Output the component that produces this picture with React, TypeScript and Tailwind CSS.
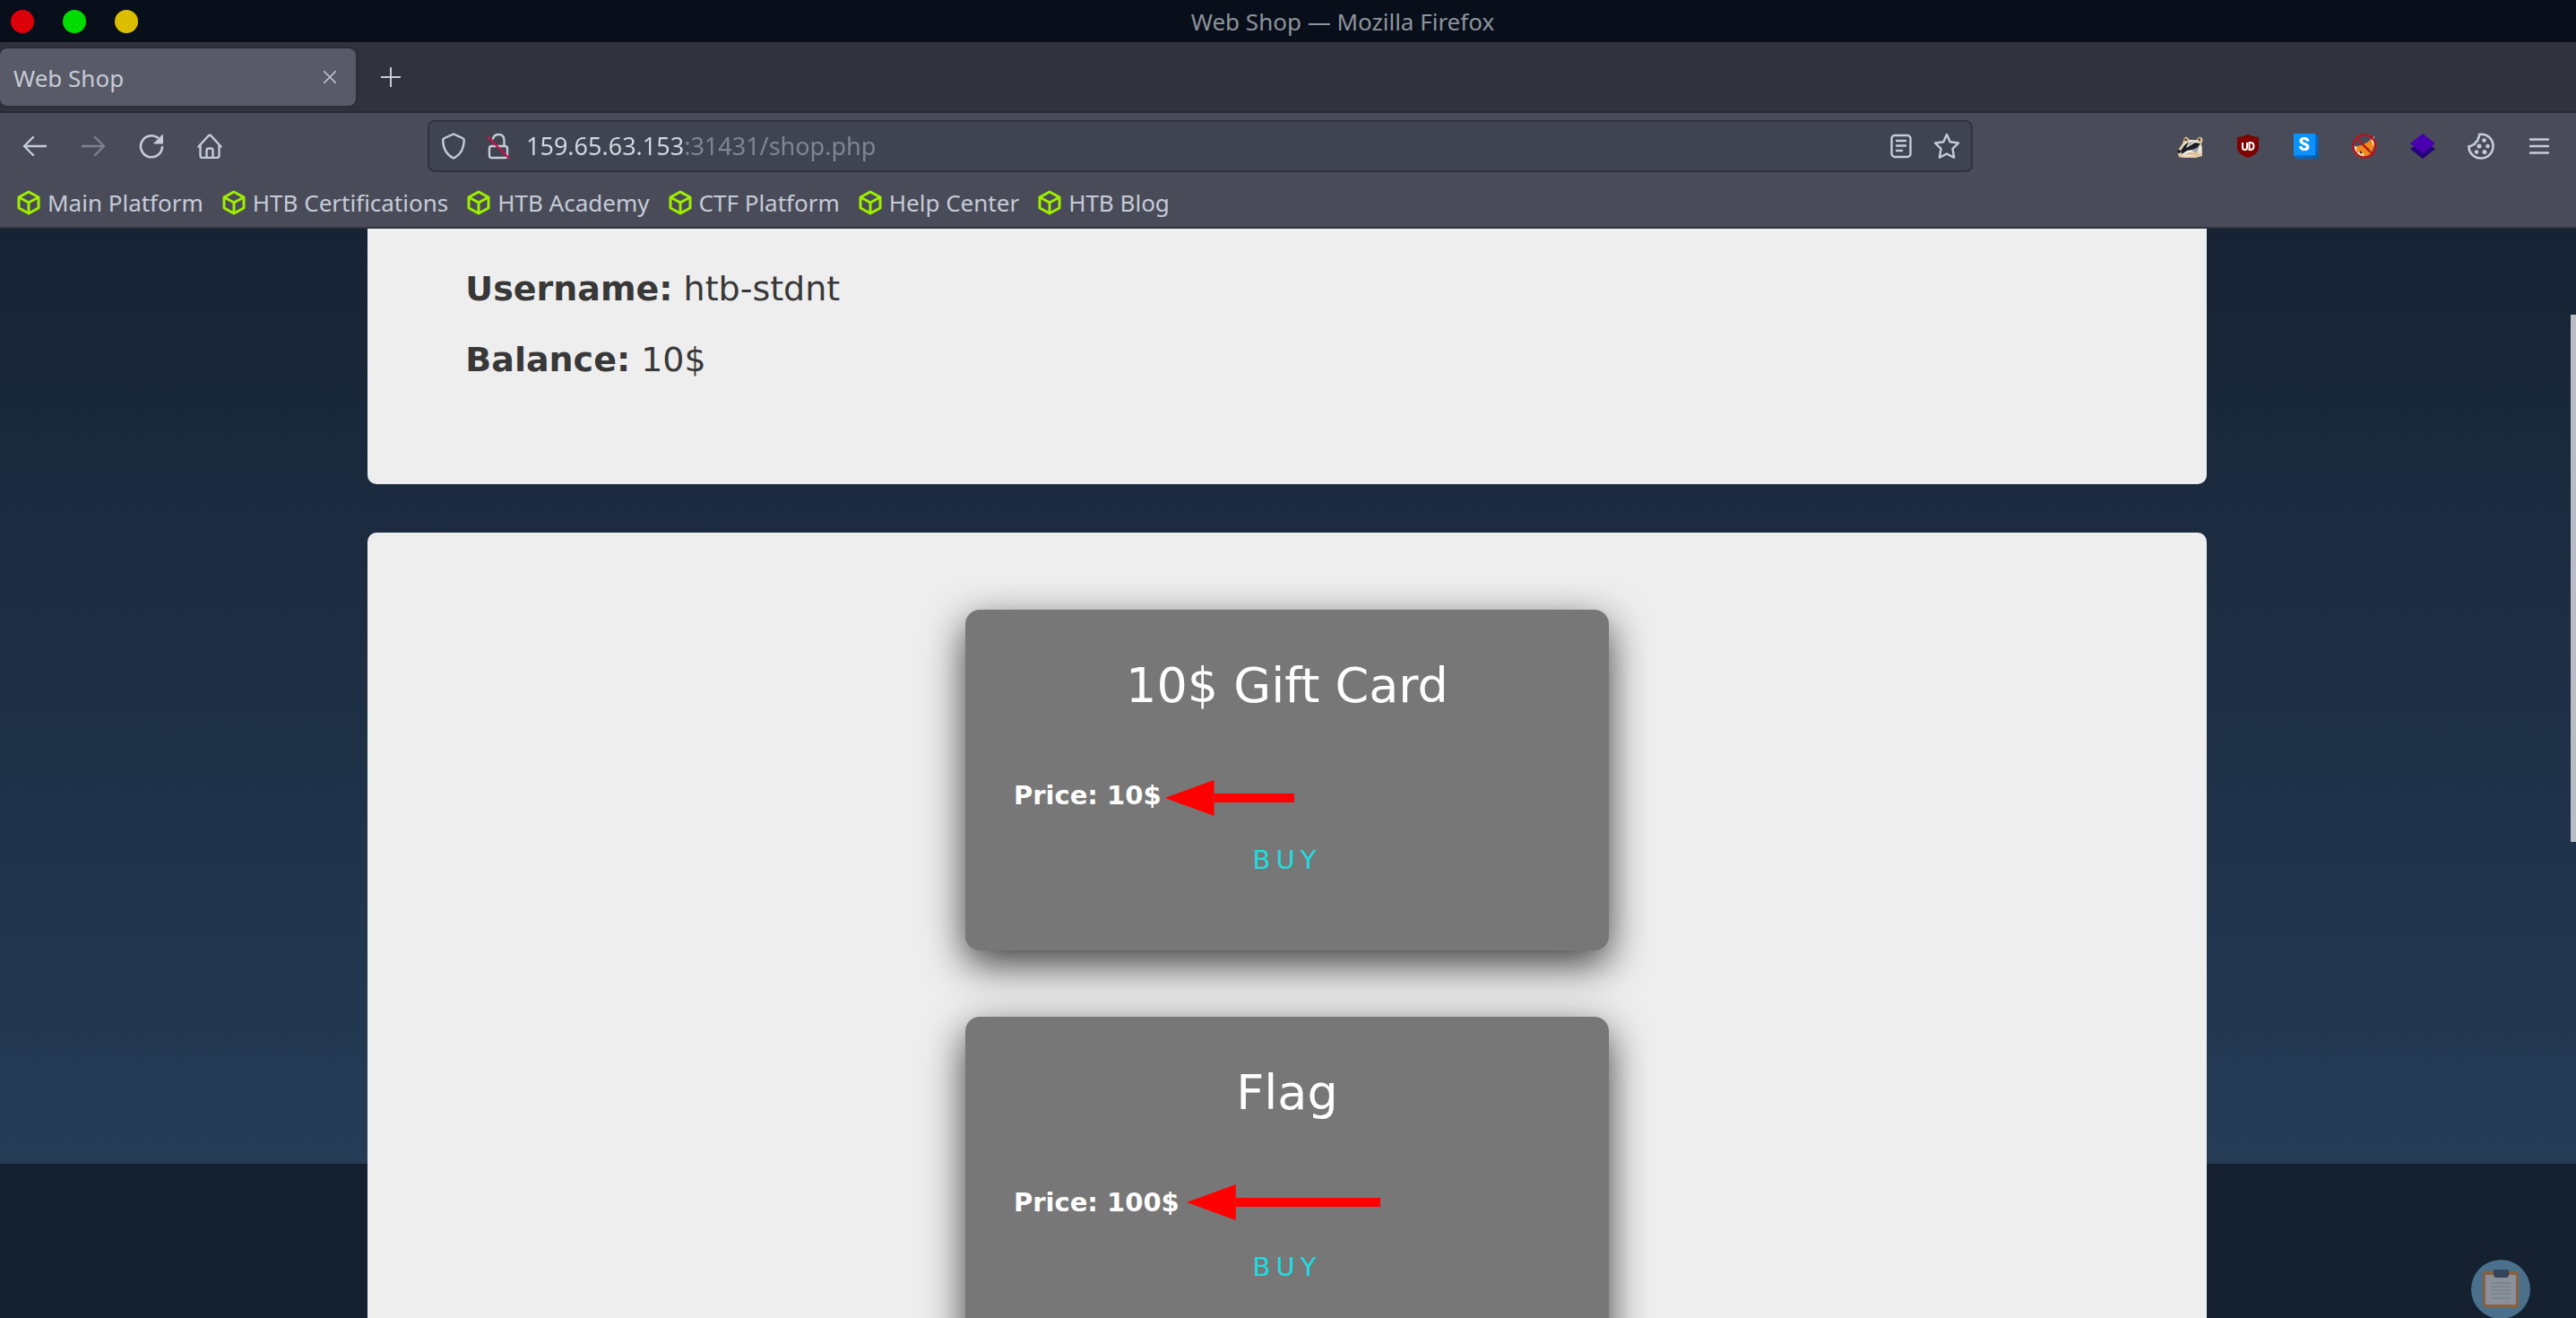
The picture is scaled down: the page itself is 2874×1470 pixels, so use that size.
import { useState } from "react";

function Cube() {
  return (
    <svg viewBox="0 0 26 28" className="h-7 w-[26px]" fill="none" stroke="#9fef00" strokeWidth="3" strokeLinejoin="round" strokeLinecap="round">
      <path d="M13 2 24 8v12l-11 6L2 20V8z" />
      <path d="M3 8.500 13 14l10-5.500M13 14v11" />
    </svg>
  );
}

function Back({ flip }: { flip?: boolean }) {
  return (
    <svg viewBox="0 0 28 24" className={flip ? "h-6 w-7 -scale-x-100" : "h-6 w-7"} fill="none" stroke="currentColor" strokeWidth="2.400" strokeLinecap="round" strokeLinejoin="round">
      <path d="M26 12H2M12 2 2 12l10 10" />
    </svg>
  );
}

function Reload() {
  return (
    <svg viewBox="0 0 28 28" className="size-7" fill="none" stroke="currentColor" strokeWidth="2.600" strokeLinecap="round">
      <path d="M21 4.500A12 12 0 1 0 26 15" />
      <path d="M26.500 1.500v9.500h-9.500z" fill="currentColor" strokeWidth="1" strokeLinejoin="round" />
    </svg>
  );
}

function House() {
  return (
    <svg viewBox="0 0 28 28" className="size-7" fill="none" stroke="currentColor" strokeWidth="2.400" strokeLinecap="round" strokeLinejoin="round">
      <path d="M1.500 14.500 12.500 2.500q1.500-1.400 3 0l11 12" />
      <path d="M3.500 13v11.500q0 2.500 2.500 2.500h16q2.500 0 2.500-2.500V13" />
      <path d="M10.500 27v-8q0-2.500 2.500-2.500h2q2.500 0 2.500 2.500v8" />
    </svg>
  );
}

function Shield() {
  return (
    <svg viewBox="0 0 26 30" className="h-[30px] w-[26px]" fill="none" stroke="currentColor" strokeWidth="2.400" strokeLinejoin="round">
      <path d="M13 1.500 23 6q2 1 1.800 3C24.500 18 20 25 13 28.500 6 25 1.500 18 1.200 9 1 7 1.500 6.500 3 6z" />
    </svg>
  );
}

function Lock() {
  return (
    <svg viewBox="0 0 26 30" className="h-[30px] w-[26px]" fill="none" stroke="currentColor" strokeWidth="2.400" strokeLinecap="round" strokeLinejoin="round">
      <path d="M7 6.500C8 3.500 10 2 13 2c4 0 6.500 2.500 6.500 6.500V15" />
      <rect x="3" y="15" width="20" height="13" rx="2.500" />
      <path d="m1.500 5 23 23" stroke="#c4154a" />
    </svg>
  );
}

function Reader() {
  return (
    <svg viewBox="0 0 24 28" className="h-7 w-6" fill="none" stroke="currentColor" strokeWidth="2.400" strokeLinecap="round">
      <rect x="1.500" y="2" width="21" height="24" rx="3.500" />
      <path d="M7 8h10M7 13.500h10M7 19h6" />
    </svg>
  );
}

function Star() {
  return (
    <svg viewBox="0 0 30 30" className="size-[30px]" fill="none" stroke="currentColor" strokeWidth="2.400" strokeLinejoin="round">
      <path d="m15 2 3.700 8.300 9.300 1.200-6.500 6.300 1.600 10L15 23.500l-8.100 4.300L8.500 17.800 2 11.500l9.300-1.200z" />
    </svg>
  );
}

function Badger() {
  return (
    <svg viewBox="0 0 30 26" className="h-[26px] w-[30px]">
      <path d="M1 19 7 10l2-6q2-3 4 0l2 2h8q1-4 5-3 3 3 0 7l1 6v8l-7 2H8l-5-1z" fill="#e3c8a0" />
      <path d="M3 20 9 10l8-4 8 2 3 6-1 7-9 3H9z" fill="#f3f1ee" />
      <path d="m5 18 4-6 5-4-3 7 10-6 6 1-4 6-11 2-6 4z" fill="#1b1d22" />
      <path d="m14 9 7-2-8 6zM17 18l9-5-3 8z" fill="#9fa4ad" />
      <path d="M9 7q0-4 3-2l1 2zM24 6q1-3 3-2v4z" fill="#5b4636" />
      <circle cx="3" cy="19" r="2" fill="#15161a" />
      <path d="m8 23 6-3 12-1-2 4z" fill="#dcc09a" />
    </svg>
  );
}

function UShield() {
  return (
    <svg viewBox="0 0 26 28" className="h-7 w-[26px]">
      <path d="M13 1q6 3 12 3v12q0 7-12 11Q1 23 1 16V4q6 0 12-3z" fill="#800000" />
      <path d="M7 10v5.500q0 2.500 2.500 2.500T12 15.500V10M14.500 10v8h1q4 0 4-4t-4-4z" fill="none" stroke="#fff" strokeWidth="2" />
    </svg>
  );
}

function SBlock() {
  return (
    <span className="flex h-7 w-7 items-start bg-[linear-gradient(135deg,#0a84ff,#0059a8)] [clip-path:polygon(0_0,86%_0,100%_14%,100%_100%,14%_100%,0_86%)]">
      <span className="flex h-6 w-6 items-center justify-center bg-[#0a93ff] font-['Roboto'] text-xl font-black leading-6 text-white">S</span>
    </span>
  );
}

function NoFox() {
  return (
    <svg viewBox="0 0 28 28" className="size-7">
      <path d="M25 3v11l-4 9-10 4-7-3-2-9 8-2 7-3z" fill="#f08a1d" />
      <path d="m2 13 3 2v8zM25 3l-3 5 2 6z" fill="#fff" />
      <path d="m7 20 5 1 2 5-5 1-4-3z" fill="#f3e3bd" />
      <path d="m9 20 2 2M17 17l2 1" stroke="#3a2a18" strokeWidth="2" />
      <circle cx="14" cy="14" r="12.500" fill="none" stroke="#b3151f" strokeWidth="2.400" />
      <path d="m5 5 18 18" stroke="#b3151f" strokeWidth="2.400" />
    </svg>
  );
}

function Layers() {
  return (
    <svg viewBox="0 0 28 28" className="size-7">
      <path d="m14 8 14 9-14 11L0 17z" fill="#24007a" />
      <path d="m14 0 14 11-14 11L0 11z" fill="#4900b0" />
    </svg>
  );
}

function CookieIcon() {
  return (
    <svg viewBox="0 0 30 30" className="size-[30px]" fill="none" stroke="currentColor" strokeWidth="2.600" strokeLinejoin="round">
      <path d="M13 2c9-1.500 15.500 5 15.500 13A13.500 13.500 0 0 1 15 28.500C7 28.500 1 22 1.500 15q3 .5 4-1.500 3 0 3.500-3 3-1 2.500-4Q13.500 5 13 2z" />
      <g fill="currentColor" stroke="none">
        <circle cx="18.500" cy="8.500" r="2.300" />
        <circle cx="13" cy="15" r="2.500" />
        <circle cx="22.500" cy="15" r="2.300" />
        <circle cx="10" cy="21.500" r="2.300" />
        <circle cx="19" cy="21.500" r="2.500" />
      </g>
    </svg>
  );
}

function MenuIcon() {
  return (
    <svg viewBox="0 0 24 20" className="h-5 w-6" stroke="currentColor" strokeWidth="2.400" strokeLinecap="round">
      <path d="M2 2.500h20M2 10h20M2 17.500h20" />
    </svg>
  );
}

function Clipboard() {
  return (
    <svg viewBox="0 0 66 66" className="size-[66px]">
      <circle cx="33" cy="33" r="33" fill="#4a708c" />
      <rect x="13" y="13" width="40" height="41" rx="3" fill="#86603f" />
      <path d="M16 17h34v33H16z" fill="#8c909b" />
      <path d="M25 11h17v6q0 3-3 3H28q-3 0-3-3z" fill="#34445a" />
      <path d="M22 26h22M22 30h22M22 34h22M22 38h22M22 43h22" stroke="#7b858c" strokeWidth="2" />
    </svg>
  );
}

function Arrow({ wide }: { wide?: boolean }) {
  return (
    <span aria-hidden="true" className="flex h-10 items-center">
      <span className="h-10 w-[55px] bg-[#ff0000] [clip-path:polygon(0_50%,100%_0,100%_100%)]" />
      <span className={wide ? "h-[10px] w-[161px] bg-[#ff0000]" : "h-[10px] w-[89px] bg-[#ff0000]"} />
    </span>
  );
}

function Product({ name, price, wide }: { name: string; price: string; wide?: boolean }) {
  return (
    <article className="h-[380px] w-[35%] shrink-0 rounded-2xl bg-[#777777] px-[54px] pt-[53px] text-white shadow-[0_15px_45px_rgba(0,0,0,0.75)]">
      <h2 className="text-center text-[54px] leading-[64px]">{name}</h2>
      <div className="mt-[68px] flex h-11 items-center">
        <p className="text-[29px] font-bold leading-9">Price: {price}</p>
        <div className={wide ? "ml-2" : "ml-1 mt-1.5"}>
          <Arrow wide={wide} />
        </div>
      </div>
      <div className="mt-8 flex justify-center">
        <button className="text-[29px] leading-9 tracking-[6px] text-[#1edde0]">BUY</button>
      </div>
    </article>
  );
}

const bookmarks = ["Main Platform", "HTB Certifications", "HTB Academy", "CTF Platform", "Help Center", "HTB Blog"];

const extensions = [
  { label: "Privacy Badger", icon: <Badger /> },
  { label: "uBlock", icon: <UShield /> },
  { label: "Stylus", icon: <SBlock /> },
  { label: "FoxyProxy", icon: <NoFox /> },
  { label: "Wappalyzer", icon: <Layers /> },
  { label: "Cookie editor", icon: <CookieIcon /> },
  { label: "Menu", icon: <MenuIcon /> },
];

export default function App() {
  const [url, setUrl] = useState("159.65.63.153:31431/shop.php");
  return (
    <div className="flex h-screen flex-col overflow-hidden font-['Noto_Sans',sans-serif] text-[#c6cbd8]">
      <header className="shrink-0">
        <div className="flex h-[47px] items-center bg-[#080f1a] pr-8">
          <div className="flex gap-8 pl-3">
            <button aria-label="Close window" className="size-[26px] rounded-full bg-[#dc0009]" />
            <button aria-label="Maximize window" className="size-[26px] rounded-full bg-[#00dc00]" />
            <button aria-label="Minimize window" className="size-[26px] rounded-full bg-[#dcbe00]" />
          </div>
          <p className="flex-1 text-center text-[26px] leading-8 text-[#8e939c]">Web Shop — Mozilla Firefox</p>
        </div>
        <div className="flex h-[79px] items-center border-b-2 border-[#292c36] bg-[#30333e]">
          <div className="flex h-16 w-[397px] items-center justify-between rounded-lg bg-[#585a67] pl-[15px] pr-[22px] shadow-[0_0_3px_#20232c]">
            <span className="pt-0.5 text-[26px] leading-8">Web Shop</span>
            <button aria-label="Close tab">
              <svg viewBox="0 0 14 14" className="size-[14px]" stroke="currentColor" strokeWidth="1.500"><path d="m0 0 14 14M14 0 0 14" /></svg>
            </button>
          </div>
          <button aria-label="New tab" className="ml-7">
            <svg viewBox="0 0 22 22" className="size-[22px]" stroke="currentColor" strokeWidth="2"><path d="M11 0v22M0 11h22" /></svg>
          </button>
        </div>
        <div className="border-b-2 border-[#30333e] bg-[#494c58]">
          <div className="flex h-[74px] items-center">
            <nav aria-label="History" className="flex w-[477px] shrink-0 items-center gap-[37px] pl-[25px]">
              <button aria-label="Back"><Back /></button>
              <button aria-label="Forward" className="text-[#7d818c]"><Back flip /></button>
              <button aria-label="Reload"><Reload /></button>
              <button aria-label="Home"><House /></button>
            </nav>
            <div className="flex h-[58px] w-[60%] items-center gap-[18px] rounded-lg border-2 border-[#30333e] bg-[#404450] pl-[14px] pr-3">
              <div className="flex items-center gap-6">
                <Shield />
                <Lock />
              </div>
              <input
                aria-label="Address"
                value={url}
                onChange={(e) => setUrl(e.target.value)}
                className="h-10 min-w-0 flex-1 bg-[linear-gradient(90deg,#d4d8e2_177px,#828691_177px)] bg-clip-text text-[27px] leading-10 text-transparent caret-white outline-none"
              />
              <div className="flex items-center gap-6">
                <button aria-label="Reader view"><Reader /></button>
                <button aria-label="Bookmark this page"><Star /></button>
              </div>
            </div>
            <div className="ml-auto flex items-center pr-[9px]">
              {extensions.map((e) => (
                <button key={e.label} aria-label={e.label} className="flex w-[65px] justify-center">{e.icon}</button>
              ))}
            </div>
          </div>
          <nav aria-label="Bookmarks" className="flex h-[53px] items-center gap-[21px] pb-0.5 pl-[19px]">
            {bookmarks.map((b) => (
              <a key={b} href="#" className="flex items-center gap-2 text-[26px] leading-8">
                <Cube />
                {b}
              </a>
            ))}
          </nav>
        </div>
      </header>

      <div className="relative min-h-0 flex-1 bg-[#152030] bg-[linear-gradient(#172334,#253b56)] bg-[length:100%_1043px] bg-no-repeat pr-0.5">
        <main className="mx-auto flex h-full w-5/7 flex-col gap-[54px] overflow-hidden font-['DejaVu_Sans',sans-serif]">
          <section className="h-[285px] shrink-0 rounded-b-[10px] bg-[#eeeeee] px-[109px] pt-7 text-[38px] leading-[79px] text-[#383838]">
            <p><b>Username:</b> htb-stdnt</p>
            <p><b>Balance:</b> 10$</p>
          </section>
          <section className="flex min-h-0 flex-1 flex-col items-center gap-[74px] overflow-hidden rounded-t-[10px] bg-[#eeeeee] pt-[86px]">
            <Product name="10$ Gift Card" price="10$" />
            <Product name="Flag" price="100$" wide />
          </section>
        </main>
        <div className="absolute right-0 top-[96px] h-[588px] w-[6px] bg-[#b8bcc4]" />
        <button aria-label="Clipboard" className="absolute -bottom-px right-[51px]"><Clipboard /></button>
      </div>
    </div>
  );
}
